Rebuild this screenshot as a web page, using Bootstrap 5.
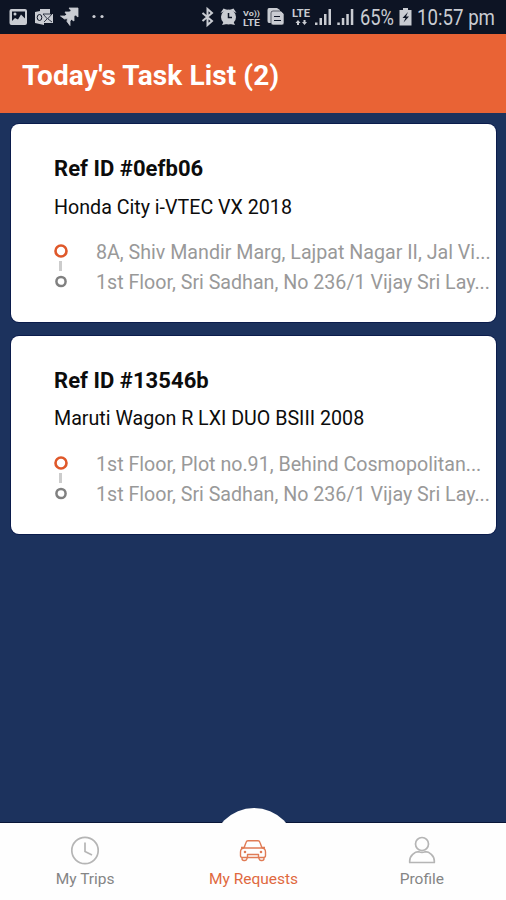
<!DOCTYPE html>
<html lang="en">
<head>
<meta charset="utf-8">
<meta name="viewport" content="width=device-width, initial-scale=1">
<title>Today's Task List</title>
<link href="https://cdn.jsdelivr.net/npm/bootstrap@5.3.0/dist/css/bootstrap.min.css" rel="stylesheet">
<style>
  body { font-family: Roboto, "Liberation Sans", sans-serif; background: #1c325d; height: 900px; overflow: hidden; }
  .status-bar { height: 34px; background: #0d1424; }
  .title-bar { height: 79px; background: #e96335; padding-left: 22px; padding-top: 4px; }
  .title-bar h1 { font-size: 28px; font-weight: 700; letter-spacing: .1px; line-height: 32px; }
  .task-list { padding: 11px 10px 0 11px; gap: 14px; }
  .task { height: 198px; border: 0; border-radius: 8px; padding: 31px 5px 0 43px; box-shadow: 0 0 0 1px #0b1c4c; color: #0c0c0c; }
  .task + .task { padding-top: 30.500px; }
  .task h2 { font-size: 22px; font-weight: 700; line-height: 28px; letter-spacing: .05px; }
  .vehicle { font-size: 19.65px; line-height: 26px; margin-top: 11.500px; }
  .route { margin-top: 16.500px; }
  .stops { font-size: 19.65px; line-height: 30.2px; color: #999; margin-left: 28px; padding-top: 1px; }
  .bottom-nav { height: 77px; background: #fefefe; color: #858585; font-size: 15.5px; box-shadow: 0 -1px 0 #091638; padding-left: 1px; }
  .bump { width: 84px; height: 84px; left: 211.5px; top: -15px; background: #fefefe; clip-path: inset(0 0 60px 0); }
  .tab { width: 169px; padding-top: 12px; text-align: center; line-height: 24px; }
  .tab svg { display: block; margin: 0 auto 2px; }
  .tab.current { color: #e0693f; }
</style>
<script src="https://cdn.jsdelivr.net/npm/bootstrap@5.3.0/dist/js/bootstrap.bundle.min.js"></script>
</head>
<body class="d-flex flex-column">
<div class="status-bar d-flex justify-content-between flex-shrink-0">
  <svg width="120" height="34" fill="#c9ccd2">
    <!-- gallery -->
    <path fill-rule="evenodd" d="M11.500 9h13.500q2 0 2 2v12q0 2-2 2h-13.500q-2 0-2-2v-12q0-2 2-2zM12 11.500v9.500l3-3 3 1.500 3-5 4 4v-7z"/>
    <circle cx="15" cy="14" r="1.500"/>
    <!-- mail -->
    <path d="M40 9h10v5h3v9h-9v2l-9-2v-11l5-1z"/>
    <path d="M43 14h9l-4.500 5zM44 22l3-3M52 22l-4-3" stroke="#0d1424" stroke-width=".8" fill="none"/>
    <ellipse cx="39.500" cy="17.500" rx="2.300" ry="3" fill="none" stroke="#0d1424" stroke-width="1"/>
    <!-- arrows -->
    <path d="M69 8h9v9l-2.500-2-1.500 1.500v4.500l-2.500-1.500-1.500 1.500v4.500l-3-4 .5-3-3 .5-4-3h4.500l1.500-1.500-1.500-2.500h4.500l1.500-1.500z" stroke="#c9ccd2" stroke-width=".8"/>
    <circle cx="94" cy="16.500" r="1.600"/><circle cx="102" cy="16.500" r="1.600"/>
  </svg>
  <svg width="310" height="34" viewBox="196 0 310 34" fill="#c9ccd2" font-family="Roboto, sans-serif">
    <!-- bluetooth -->
    <path d="M202.500 13l9.500 8-4.500 4v-16l4.500 4-9.500 8" fill="none" stroke="#c9ccd2" stroke-width="2"/>
    <!-- alarm -->
    <circle cx="228.500" cy="17" r="7.500"/><path d="M220.500 13l3-4.500 4 1.500zM236.500 13l-3-4.500-4 1.500zM222 25l2-4 3 3zM235 25l-2-4-3 3z"/>
    <path d="M228.500 13v4.500h3.500" fill="none" stroke="#0d1424" stroke-width="1.500"/>
    <text x="243" y="15.500" font-size="8" font-weight="700" textLength="17" lengthAdjust="spacingAndGlyphs">Vo))</text>
    <text x="243" y="25.500" font-size="9" font-weight="700" textLength="17" lengthAdjust="spacingAndGlyphs">LTE</text>
    <!-- documents -->
    <path d="M269 8h8l3 2v2h-7l-2 2v9h-2q-1.500 0-1.500-2v-11q0-2 1.500-2z"/>
    <path d="M273 11h8l3 3v9q0 2-2 2h-9q-2 0-2-2v-10q0-2 2-2z" stroke="#0d1424" stroke-width=".6"/><path d="M274 16.500h6M274 20.500h7" stroke="#0d1424"/>
    <text x="292" y="17" font-size="10.500" font-weight="700" textLength="18" lengthAdjust="spacingAndGlyphs">LTE</text>
    <path d="M298 20l2.500 3h-1.500v2h-2v-2h-1.500zM304.500 25l2.500-3h-1.500v-2h-2v2h-1.500z"/>
    <!-- signal strength -->
    <path id="bars" d="M315 22.500h2.500v2.500h-2.500zM319.500 18h2.500v7h-2.500zM324 14h2.500v11h-2.500zM328.500 9h2.500v16h-2.500z"/>
    <use href="#bars" x="22.300"/>
    <text x="360" y="24.500" font-size="21.500" textLength="34" lengthAdjust="spacingAndGlyphs">65%</text>
    <!-- battery -->
    <path d="M403 8h5v2h3.500v15.500h-12v-15.500h3.500z"/><path d="M408 12l-5.500 6h3l-2 4.500 5.500-6h-3z" fill="#0d1424"/>
    <text x="417" y="24.500" font-size="21.500" textLength="78" lengthAdjust="spacingAndGlyphs">10:57 pm</text>
  </svg>
</div>
<header class="title-bar d-flex align-items-center flex-shrink-0 text-white"><h1 class="m-0">Today's Task List (2)</h1></header>
<main class="task-list d-flex flex-column flex-grow-1">
  <article class="card task">
    <h2 class="mb-0">Ref ID #0efb06</h2>
    <div class="vehicle">Honda City i-VTEC VX 2018</div>
    <div class="route d-flex">
      <svg class="flex-shrink-0" width="14" height="60" fill="none"><circle cx="7" cy="14" r="5.500" stroke="#df582a" stroke-width="2.600"/><path d="M6.500 24v10" stroke="#ccc" stroke-width="3"/><circle cx="7" cy="44.500" r="4.600" stroke="#808080" stroke-width="2.500"/></svg>
      <div class="stops text-nowrap"><div>8A, Shiv Mandir Marg, Lajpat Nagar II, Jal Vi...</div><div>1st Floor, Sri Sadhan, No 236/1 Vijay Sri Lay...</div></div>
    </div>
  </article>
  <article class="card task">
    <h2 class="mb-0">Ref ID #13546b</h2>
    <div class="vehicle">Maruti Wagon R LXI DUO BSIII 2008</div>
    <div class="route d-flex">
      <svg class="flex-shrink-0" width="14" height="60" fill="none"><circle cx="7" cy="14" r="5.500" stroke="#df582a" stroke-width="2.600"/><path d="M6.500 24v10" stroke="#ccc" stroke-width="3"/><circle cx="7" cy="44.500" r="4.600" stroke="#808080" stroke-width="2.500"/></svg>
      <div class="stops text-nowrap"><div>1st Floor, Plot no.91, Behind Cosmopolitan...</div><div>1st Floor, Sri Sadhan, No 236/1 Vijay Sri Lay...</div></div>
    </div>
  </article>
</main>
<nav class="bottom-nav d-flex position-relative flex-shrink-0">
  <div class="bump position-absolute rounded-circle"></div>
  <div class="tab position-relative">
    <svg width="30" height="30" fill="none" stroke="#b5b5b5" stroke-width="1.700"><circle cx="15" cy="15.500" r="13.200"/><path d="M15 7.500v9l7 3.500"/></svg>
    My Trips
  </div>
  <div class="tab current position-relative">
    <svg width="30" height="30" fill="none" stroke="#e07b55" stroke-width="1.400" stroke-linejoin="round"><path d="M6 13l2-5.500q.6-1.800 2-1.800h10q1.400 0 2 1.800l2 5.500M6.500 13h17q4 0 4 4v3.500q0 2-2 2h-21q-2 0-2-2v-3.500q0-4 4-4zM6 12.500H3M24 12.500h3M4 22.500v1q0 2 2 2h1q1.300 0 1.800-1.500l.7-1.500M26 22.500v1q0 2-2 2h-1q-1.300 0-1.800-1.500l-.7-1.500M9.500 22.500v-3h11v3"/><circle cx="7" cy="17" r=".6"/><circle cx="23" cy="17" r=".6"/></svg>
    My Requests
  </div>
  <div class="tab position-relative">
    <svg width="30" height="30" fill="none" stroke="#b5b5b5" stroke-width="1.700" stroke-linejoin="round"><circle cx="15" cy="9" r="6.500"/><path d="M2.700 27.500v-1.500c0-5.500 5-9.300 9-9.300q3.300 1.300 6.600 0c4 0 9 3.800 9 9.300v1.500z"/></svg>
    Profile
  </div>
</nav>
</body>
</html>
